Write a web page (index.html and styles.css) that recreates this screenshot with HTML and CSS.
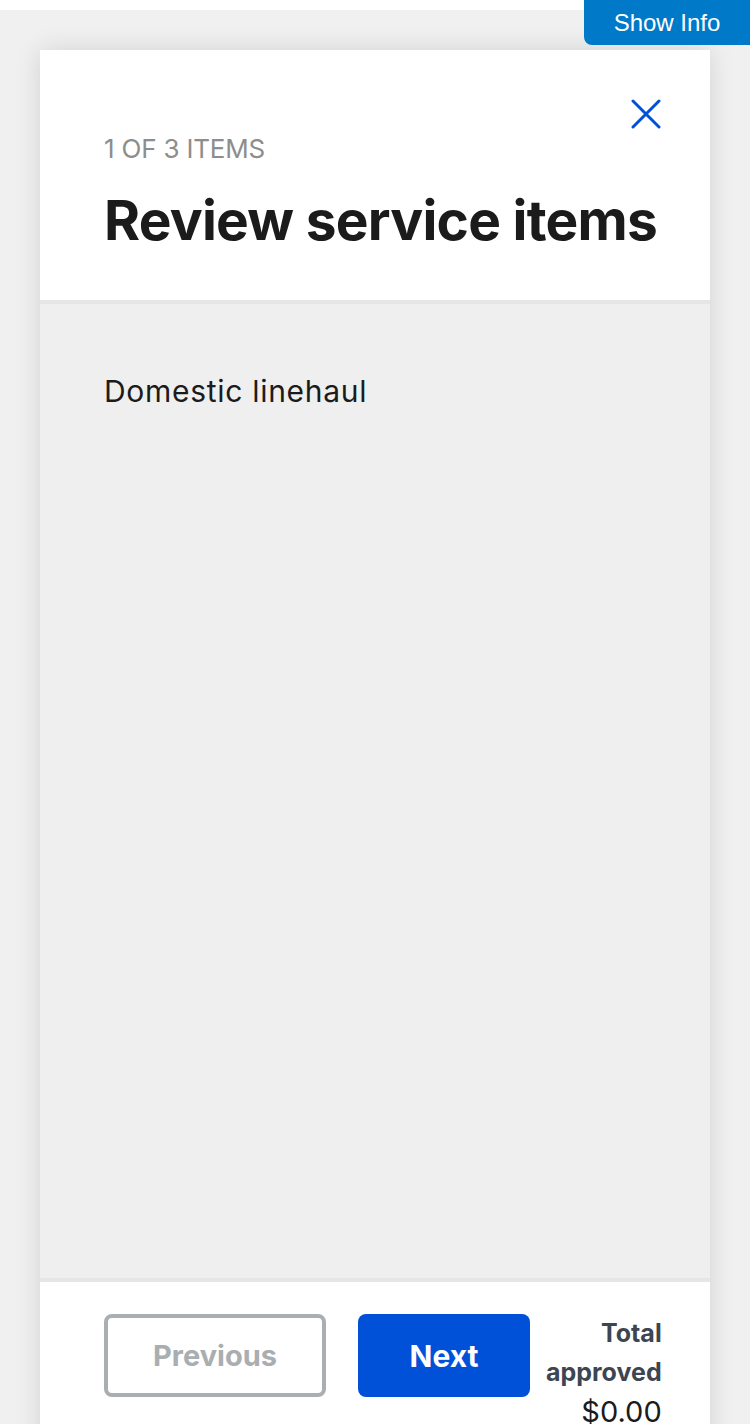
FILE: index.html
```html
<!DOCTYPE html>
<html lang="en">
<head>
<meta charset="utf-8">
<title>Review service items</title>
<link rel="stylesheet" href="styles.css">
</head>
<body>
<div class="page">
  <button class="show-info">Show Info</button>
  <div class="modal">
    <header class="modal-header">
      <div class="close-row">
        <button class="close" aria-label="Close">
          <svg width="30" height="30" viewBox="0 0 30 30"><path d="M2 2 L28 28 M28 2 L2 28" stroke="#0050d8" stroke-width="3" stroke-linecap="round" fill="none"/></svg>
        </button>
      </div>
      <div class="count">1 OF 3 ITEMS</div>
      <h1 class="title">Review service items</h1>
    </header>
    <main class="modal-body">
      <div class="item-name">Domestic linehaul</div>
    </main>
    <footer class="modal-footer">
      <button class="btn btn-prev" disabled>Previous</button>
      <button class="btn btn-next">Next</button>
      <div class="total">
        <div class="total-label">Total approved</div>
        <div class="total-value">$0.00</div>
      </div>
    </footer>
  </div>
</div>
</body>
</html>
```
FILE: styles.css
```css
html, body {
  margin: 0;
  padding: 0;
  background: #ffffff;
  font-family: "Inter", "Roboto", "Liberation Sans", sans-serif;
}
.page {
  margin-top: 10px;
  background: #f0f0f0;
  padding-top: 40px;
  overflow: hidden;
  box-sizing: border-box;
  height: 1414px;
}
.show-info {
  position: absolute;
  top: 0;
  right: 0;
  width: 166px;
  height: 45px;
  border: none;
  border-bottom-left-radius: 8px;
  background: #0079c8;
  color: #ffffff;
  font-family: "Liberation Sans", Arial, sans-serif;
  font-size: 24px;
  line-height: 45px;
  padding: 0 0 2px 0;
  z-index: 2;
}
.modal {
  margin: 0 40px;
  background: #ffffff;
  box-shadow: 0 0 24px rgba(0, 0, 0, 0.12);
  display: flex;
  flex-direction: column;
  height: 1400px;
}
.modal-header {
  padding: 45px 49px 0 64px;
  height: 254px;
  box-sizing: border-box;
  border-bottom: 4px solid #e6e6e6;
  flex: none;
}
.close-row {
  display: flex;
  justify-content: flex-end;
}
.close {
  border: none;
  background: none;
  padding: 4px 0;
  width: 30px;
  height: 38px;
  display: flex;
  align-items: center;
  justify-content: center;
}
.count {
  margin-top: 1px;
  font-size: 26px;
  line-height: 30px;
  color: #8d8d8d;
  letter-spacing: -0.2px;
}
.title {
  margin: 23px 0 0 0;
  font-size: 55px;
  line-height: 66px;
  font-weight: 700;
  color: #1b1b1b;
  letter-spacing: -0.75px;
  white-space: nowrap;
}
.modal-body {
  background: #efefef;
  height: 978px;
  flex: none;
  padding: 69px 64px 0;
  box-sizing: border-box;
  border-bottom: 4px solid #e6e6e6;
}
.item-name {
  font-size: 30px;
  line-height: 36px;
  color: #1b1b1b;
  letter-spacing: 0.7px;
}
.modal-footer {
  display: flex;
  align-items: flex-start;
  padding: 32px 49px 0 64px;
  background: #ffffff;
  flex: 1;
}
.btn {
  flex: none;
  height: 83px;
  border-radius: 8px;
  font-family: inherit;
  font-weight: 700;
  padding: 0;
  box-sizing: border-box;
}
.btn-prev {
  width: 222px;
  background: #ffffff;
  border: 4px solid #a9aeb1;
  color: #a9aeb1;
  font-size: 29px;
}
.btn-next {
  margin-left: 32px;
  width: 172px;
  background: #0050d8;
  border: none;
  color: #ffffff;
  font-size: 30px;
}
.total {
  flex: 1;
  margin-left: 16px;
  text-align: right;
  margin-top: 0;
}
.total-label {
  font-size: 25px;
  line-height: 39px;
  font-weight: 700;
  color: #3d4551;
}
.total-value {
  font-size: 29px;
  line-height: 40px;
  color: #1b1b1b;
}
```
